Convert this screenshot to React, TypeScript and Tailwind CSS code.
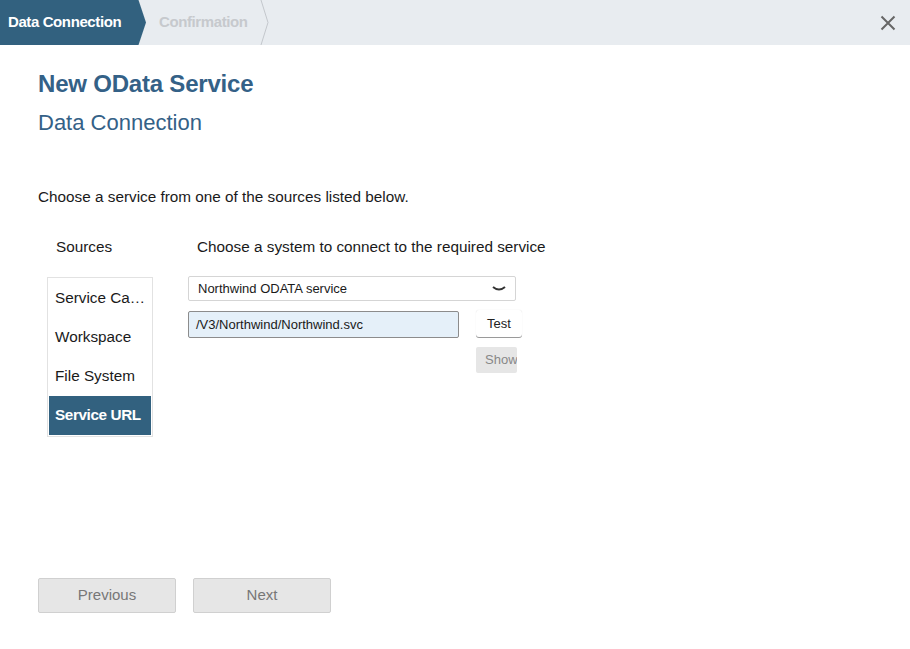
export default function App() {
  const sources = ["Service Ca…", "Workspace", "File System", "Service URL"];
  return (
    <div className="w-[910px] h-[649px] bg-white font-['Liberation_Sans',Arial,sans-serif] text-[#1a1a1a] overflow-hidden">
      {/* Wizard steps */}
      <div className="h-[45px] bg-[#e8ecf0] flex items-stretch relative">
        <div className="relative flex items-center pl-[8px] pb-px bg-[#32617f] text-white text-[15px] font-bold tracking-[-0.4px] w-[138px] shrink-0 whitespace-nowrap">
          Data Connection
          <svg className="absolute left-[138px] top-0" width="9" height="45" viewBox="0 0 9 45">
            <polygon points="0,0 0.5,0 8,22.5 0.5,45 0,45" fill="#32617f" />
          </svg>
        </div>
        <div className="relative flex items-center pl-[21px] pb-px w-[130px] shrink-0 text-[15px] font-bold text-[#c6c9cd] tracking-[-0.4px] whitespace-nowrap">
          Confirmation
          <svg className="absolute left-[122px] top-0" width="10" height="45" viewBox="0 0 10 45">
            <polyline points="1,0 8,22.5 1,45" fill="none" stroke="#c3c7cc" strokeWidth="1" />
          </svg>
        </div>
        <div className="flex-1" />
        <button className="w-[44px] flex items-center justify-center">
          <svg width="16" height="16" viewBox="0 0 16 16">
            <path d="M1.5 1.5 L14.5 14.5 M14.5 1.5 L1.5 14.5" stroke="#666" strokeWidth="2" />
          </svg>
        </button>
      </div>

      <div className="px-[38px] pt-[25px]">
        <h1 className="text-[24px] font-bold text-[#346187] leading-[28px] tracking-[-0.2px]">New OData Service</h1>
        <h2 className="text-[22px] text-[#346187] leading-[26px] mt-[12px]">Data Connection</h2>

        <p className="text-[15.3px] mt-[52px] leading-[18px]">Choose a service from one of the sources listed below.</p>

        <div className="flex mt-[32px]">
          <div className="w-[150px] shrink-0">
            <div className="pl-[18px] text-[15.3px] leading-[18px]">Sources</div>
            <div className="ml-[9px] mt-[21px] w-[106px] border border-[#e2e2e2] p-px">
              {sources.map((s, i) => (
                <div
                  key={s}
                  className={
                    "h-[39px] flex items-center pl-[6px] text-[15.3px] whitespace-nowrap " +
                    (i === 3 ? "bg-[#32617f] text-white font-bold tracking-[-0.4px]" : "")
                  }
                >
                  {s}
                </div>
              ))}
            </div>
          </div>

          <div>
            <div className="pl-[9px] text-[15.3px] leading-[18px]">Choose a system to connect to the required service</div>
            <div className="mt-[20px] w-[328px] h-[25px] border border-[#d5d5d5] rounded-[2px] flex items-center justify-between pl-[9px] pr-[9px] text-[13px]">
              <span>Northwind ODATA service</span>
              <svg width="14" height="8" viewBox="0 0 14 8">
                <path d="M1 2 Q7 7 13 2" fill="none" stroke="#333" strokeWidth="2" />
              </svg>
            </div>
            <div className="flex mt-[10px]">
              <div className="w-[271px] h-[27px] bg-[#e5f0f9] border border-[#8c8c8c] rounded-[2px] flex items-center pl-[7px] text-[13px]">
                /V3/Northwind/Northwind.svc
              </div>
              <div className="ml-[17px] flex flex-col -mt-px">
                <button className="w-[46px] h-[27px] bg-white rounded-[3px] shadow-[0_1px_0_#9a9a9a,0_0_1px_#ddd] text-[13px] text-[#222]">
                  Test
                </button>
                <button className="mt-[10px] w-[41px] h-[26px] bg-[#e6e6e6] rounded-[2px] text-[13px] text-[#888] overflow-hidden whitespace-nowrap text-left pl-[9px]">
                  Show
                </button>
              </div>
            </div>
          </div>
        </div>

        <div className="flex gap-[17px] mt-[141px]">
          <button className="w-[138px] h-[35px] bg-[#e6e6e6] border border-[#d0d0d0] rounded-[2px] text-[15px] text-[#777]">
            Previous
          </button>
          <button className="w-[138px] h-[35px] bg-[#e6e6e6] border border-[#d0d0d0] rounded-[2px] text-[15px] text-[#777]">
            Next
          </button>
        </div>
      </div>
    </div>
  );
}
